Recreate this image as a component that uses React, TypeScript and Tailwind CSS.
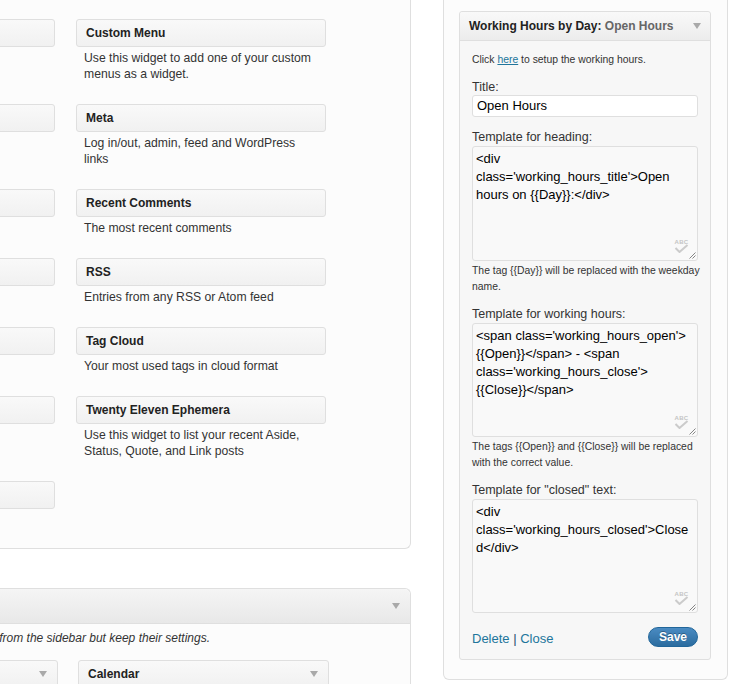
import React from 'react';

const Arrow = () => (
  <span className="inline-block w-0 h-0 border-x-[4px] border-x-transparent border-t-[6px] border-t-[#a9a9a9]" />
);

const WidgetBox = ({ title, arrow }: { title?: string; arrow?: boolean }) => (
  <div className="h-[28px] w-full border border-[#dfdfdf] rounded-[3px] bg-linear-to-b from-[#f9f9f9] to-[#f1f1f1] flex items-center justify-between pl-[9px] pr-[10px]">
    <span className="text-[12px] font-bold text-[#222]">{title}</span>
    {arrow && <Arrow />}
  </div>
);

const AvailableRow = ({ title, lines }: { title?: string; lines?: string[] }) => (
  <div className="flex gap-[21px] mb-[22px]">
    <div className="w-[250px] shrink-0">
      <WidgetBox />
    </div>
    {title && (
      <div className="w-[250px] shrink-0">
        <WidgetBox title={title} />
        <p className="pt-[3px] pl-[8px] text-[12.2px] leading-4 text-[#333]">
          {lines?.map((l, i) => (
            <span key={i} className="block whitespace-nowrap">{l}</span>
          ))}
        </p>
      </div>
    )}
  </div>
);

// Safari's spell-check badge in the textarea corner
const SpellMark = () => (
  <div className="absolute right-[8px] bottom-[7px] flex flex-col items-center">
    <span className="text-[6px] leading-none font-bold tracking-[0.3px] text-[#c4c4c4]">ABC</span>
    <svg width="15" height="9" viewBox="0 0 15 9" className="-mt-[1px]">
      <path d="M1.5 4 L5.5 8 L13.5 1" fill="none" stroke="#cbcbcb" strokeWidth="2" />
    </svg>
  </div>
);

const Grip = () => (
  <svg className="absolute right-[1px] bottom-[1px]" width="8" height="8" viewBox="0 0 8 8">
    <path d="M7.5 1.5 L1.5 7.5 M7.5 4.5 L4.5 7.5" stroke="#777" strokeWidth="0.9" />
  </svg>
);

const FakeTextarea = ({ lines, h }: { lines: string[]; h: string }) => (
  <div className={`relative mt-[1px] w-full ${h} border border-[#dfdfdf] rounded-[3px] bg-[#f9f9f9] px-[3px] pt-[3px] text-[13px] leading-[18px] text-black`}>
    {lines.map((l, i) => (
      <div key={i} className="whitespace-pre">{l}</div>
    ))}
    <SpellMark />
    <Grip />
  </div>
);

const Help = ({ lines }: { lines: string[] }) => (
  <p className="mt-[2px] text-[10.4px] leading-4 text-[#333]">
    {lines.map((l, i) => (
      <span key={i} className="block whitespace-nowrap">{l}</span>
    ))}
  </p>
);

export default function App() {
  return (
    <div className="w-[739px] h-[684px] overflow-hidden bg-white flex font-['Liberation_Sans',Arial,sans-serif]">
      {/* left: available + inactive widgets */}
      <div className="w-[411px] shrink-0 flex flex-col">
        <div className="-ml-[220px] w-[631px] h-[549px] shrink-0 border-r border-b border-[#dfdfdf] rounded-br-[6px] bg-[#fcfcfc] pl-[25px] pt-[19px]">
          <AvailableRow title="Custom Menu" lines={['Use this widget to add one of your custom', 'menus as a widget.']} />
          <AvailableRow title="Meta" lines={['Log in/out, admin, feed and WordPress', 'links']} />
          <AvailableRow title="Recent Comments" lines={['The most recent comments']} />
          <AvailableRow title="RSS" lines={['Entries from any RSS or Atom feed']} />
          <AvailableRow title="Tag Cloud" lines={['Your most used tags in cloud format']} />
          <AvailableRow title="Twenty Eleven Ephemera" lines={['Use this widget to list your recent Aside,', 'Status, Quote, and Link posts']} />
          <AvailableRow />
        </div>

        <div className="-ml-[220px] w-[631px] mt-[39px] shrink-0 border-t border-r border-[#dfdfdf] rounded-tr-[6px] bg-[#fcfcfc]">
          <div className="h-[35px] border-b border-[#dfdfdf] bg-linear-to-b from-[#f5f5f5] to-[#e8e8e8] rounded-tr-[6px] flex items-center justify-end pr-[10px]">
            <Arrow />
          </div>
          <div className="pt-[6px] flex justify-end w-[430px]">
            <span className="whitespace-nowrap italic text-[12px] leading-4 text-[#333]">
              Drag widgets here to remove them from the sidebar but keep their settings.
            </span>
          </div>
          <div className="mt-[14px] pl-[28px] flex gap-[20px]">
            <div className="w-[250px]">
              <WidgetBox arrow />
            </div>
            <div className="w-[251px]">
              <WidgetBox title="Calendar" arrow />
            </div>
          </div>
        </div>
      </div>

      {/* right: sidebar with open widget */}
      <div className="ml-[32px] w-[285px] h-[680px] shrink-0 border-x border-b border-[#dfdfdf] rounded-b-[6px] bg-[#fcfcfc] px-[15px] pt-[11px]">
        <div className="w-[252px] border border-[#dfdfdf] rounded-[3px] bg-[#f7f7f7]">
          <div className="h-[29px] border-b border-[#dfdfdf] bg-linear-to-b from-[#f9f9f9] to-[#ececec] rounded-t-[3px] flex items-center justify-between pl-[9px] pr-[9px]">
            <span className="text-[12px] font-bold text-[#222]">
              Working Hours by Day:<span className="text-[#666]"> Open Hours</span>
            </span>
            <Arrow />
          </div>

          <div className="px-[12px] pt-[11px] pb-[12px]">
            <p className="text-[10.4px] leading-4 text-[#333] whitespace-nowrap">
              Click <a className="text-[#21759b] underline">here</a> to setup the working hours.
            </p>

            <label className="block mt-[11px] text-[12.5px] leading-4 text-[#333]">Title:</label>
            <div className="h-[22px] w-full border border-[#dfdfdf] rounded-[3px] bg-white px-[4px] flex items-center text-[13px] text-black">
              Open Hours
            </div>

            <label className="block mt-[12px] text-[12.5px] leading-4 text-[#333]">Template for heading:</label>
            <FakeTextarea h="h-[115px]" lines={['<div', "class='working_hours_title'>Open", 'hours on {{Day}}:</div>']} />
            <Help lines={['The tag {{Day}} will be replaced with the weekday', 'name.']} />

            <label className="block mt-[11px] text-[12.5px] leading-4 text-[#333]">Template for working hours:</label>
            <FakeTextarea
              h="h-[114px]"
              lines={["<span class='working_hours_open'>", '{{Open}}</span> - <span', "class='working_hours_close'>", '{{Close}}</span>']}
            />
            <Help lines={['The tags {{Open}} and {{Close}} will be replaced', 'with the correct value.']} />

            <label className="block mt-[11px] text-[12.5px] leading-4 text-[#333]">Template for "closed" text:</label>
            <FakeTextarea h="h-[114px]" lines={['<div', "class='working_hours_closed'>Close", 'd</div>']} />

            <div className="mt-[14px] flex items-center justify-between">
              <span className="text-[13px] leading-4 mt-[4px]">
                <a className="text-[#21759b]">Delete</a>
                <span className="text-[#1e4f70]"> | </span>
                <a className="text-[#21759b]">Close</a>
              </span>
              <button className="h-[20px] px-[10px] rounded-full border border-[#21669a] bg-linear-to-b from-[#4a8bc2] to-[#2b6c9f] text-white text-[12px] font-bold leading-none [text-shadow:0_-1px_0_rgba(0,0,0,0.3)]">
                Save
              </button>
            </div>
          </div>
        </div>
      </div>
    </div>
  );
}
